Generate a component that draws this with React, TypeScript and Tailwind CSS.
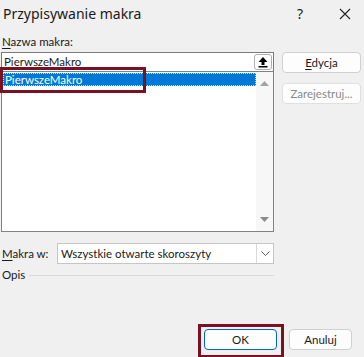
import React from "react";

const font = { fontFamily: 'Lato, "Noto Sans", sans-serif' };
const titleFont = { fontFamily: '"Noto Sans", sans-serif' };

function UpBtn() {
  return (
    <div className="absolute right-[1px] top-[1px] w-[18px] h-[16px] bg-white border border-[#adadad] rounded-[3px] flex items-center justify-center">
      <svg width="10" height="12" viewBox="0 0 10 12">
        <path d="M5 1 L9.5 6 L6.5 6 L6.5 9 L3.5 9 L3.5 6 L0.5 6 Z" fill="#000" />
        <rect x="0.5" y="10" width="9" height="1.5" fill="#000" />
      </svg>
    </div>
  );
}

function Btn({ children, className = "" }: { children: React.ReactNode; className?: string }) {
  return (
    <div
      className={
        "h-[21px] rounded-[4px] border bg-[#fdfdfd] flex items-center justify-center text-[11.5px] leading-[16px] " +
        className
      }
    >
      {children}
    </div>
  );
}

export default function App() {
  return (
    <div className="relative w-[364px] h-[357px] bg-[#f0f0f0] text-[#1a1a1a] overflow-hidden" style={font}>
      {/* Title bar */}
      <div className="h-[34px] flex items-start pt-[5px]" style={titleFont}>
        <div className="pl-[3px] text-[14px] leading-[18px] text-[#1a1a1a] flex-1">Przypisywanie makra</div>
        <div className="w-[20px] text-center text-[14px] leading-[18px] mr-[25px]">?</div>
        <div className="w-[20px] mr-[9px] flex justify-center pt-[3px]">
          <svg width="12" height="12" viewBox="0 0 12 12">
            <path d="M1 1 L11 11 M11 1 L1 11" stroke="#222" strokeWidth="1.1" />
          </svg>
        </div>
      </div>

      <div className="pl-[1px]">
        <div className="h-[16px] text-[11.5px] leading-[16px] pl-[1px]">
          <span className="underline underline-offset-[2px]">N</span>azwa makra:
        </div>
        <div className="flex mt-[2px]">
          {/* Left column */}
          <div className="w-[273px]">
            <div className="relative h-[19px] bg-white border border-[#7a7a7a] border-b-0">
              <div className="pl-[2px] text-[11.5px] leading-[18px]">PierwszeMakro</div>
              <UpBtn />
            </div>
            <div className="h-[161px] bg-white border border-[#828282] flex">
              <div className="flex-1 pt-[1px] pl-[1px]">
                <div className="h-[13px] bg-[#0078d7] border border-dotted border-[#c8dff5] text-white text-[11.5px] leading-[11px] pl-[1px]">
                  PierwszeMakro
                </div>
              </div>
              <div className="w-[17px] bg-[#f7f7f7] flex flex-col items-center justify-between py-[9px]">
                <svg width="9" height="5" viewBox="0 0 9 5">
                  <path d="M0 5 L4.5 0 L9 5 Z" fill="#a3a3a3" />
                </svg>
                <svg width="9" height="5" viewBox="0 0 9 5">
                  <path d="M0 0 L4.5 5 L9 0 Z" fill="#8a8a8a" />
                </svg>
              </div>
            </div>
          </div>
          {/* Right column */}
          <div className="ml-[8px] w-[79px] flex flex-col gap-[10px]">
            <Btn className="border-[#d0d0d0]">
              <span>
                <span className="underline underline-offset-[2px]">E</span>dycja
              </span>
            </Btn>
            <Btn className="border-[#e0e0e0] bg-[#f6f6f6] text-[#8a8a8a]">Zarejestruj...</Btn>
          </div>
        </div>

        {/* Makra w */}
        <div className="flex items-center mt-[11px] h-[21px] w-[273px]">
          <div className="w-[56px] pl-[1px] text-[11.5px] leading-[16px]">
            <span className="underline underline-offset-[2px]">M</span>akra w:
          </div>
          <div className="flex-1 h-[21px] bg-white border border-[#c5c5c5] flex">
            <div className="flex-1 pl-[3px] text-[11.5px] leading-[19px]">Wszystkie otwarte skoroszyty</div>
            <div className="w-[17px] border-l border-[#d9d9d9] flex items-center justify-center">
              <svg width="9" height="5" viewBox="0 0 9 5">
                <path d="M0.5 0.5 L4.5 4.5 L8.5 0.5" stroke="#555" strokeWidth="1" fill="none" />
              </svg>
            </div>
          </div>
        </div>

        {/* Opis */}
        <div className="flex items-center mt-[3px] h-[16px] w-[273px]">
          <div className="pl-[1px] text-[11.5px] leading-[16px] pr-[4px]">Opis</div>
          <div className="flex-1 h-px bg-[#dcdcdc]" />
        </div>

        {/* Bottom buttons */}
        <div className="flex mt-[46px] pl-[203px] gap-[12px]">
          <Btn className="w-[73px] border-[#0067c0] bg-[#fdfdfd]">OK</Btn>
          <Btn className="w-[63px] border-[#d0d0d0]">Anuluj</Btn>
        </div>
      </div>

      {/* Annotation rectangles */}
      <div className="absolute left-0 top-[67px] w-[146px] h-[26px] border-[3px] border-[#7b1022]" />
      <div className="absolute left-[198px] top-[324px] w-[86px] h-[34px] border-[3px] border-[#7b1022]" />
    </div>
  );
}
